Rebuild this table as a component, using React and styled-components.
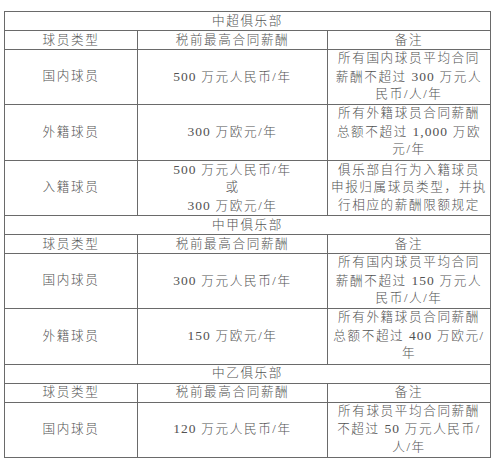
import React from 'react';
import styled, { createGlobalStyle } from 'styled-components';

const GlobalStyle = createGlobalStyle`
  html, body {
    margin: 0;
    padding: 0;
    background: #fff;
  }
`;

const Page = styled.div`
  padding: 11px 0 0 4px;
`;

const Table = styled.table`
  border-collapse: collapse;
  table-layout: fixed;
  width: 486px;
  font-family: 'Liberation Serif', 'Noto Sans CJK SC', serif;
  font-size: 12.6px;
  font-weight: 300;
  letter-spacing: 1.6px;
  color: #525252;
`;

const Row = styled.tr`
  height: ${(p) => p.h}px;
`;

const Cell = styled.td`
  border: 1px solid #6a6a6a;
  padding: 0;
  text-align: center;
  vertical-align: middle;
  line-height: ${(p) => (p.multi ? '17.5px' : '17px')};
  white-space: nowrap;
`;

const Num = styled.span`
  font-size: 13.5px;
  font-weight: 400;
  letter-spacing: 1px;
`;

const sections = [
  {
    title: '中超俱乐部',
    rows: [
      {
        type: '国内球员',
        pay: ['500 万元人民币/年'],
        note: ['所有国内球员平均合同', '薪酬不超过 300 万元人', '民币/人/年'],
        h: 54,
      },
      {
        type: '外籍球员',
        pay: ['300 万欧元/年'],
        note: ['所有外籍球员合同薪酬', '总额不超过 1,000 万欧', '元/年'],
        h: 56,
      },
      {
        type: '入籍球员',
        pay: ['500 万元人民币/年', '或', '300 万欧元/年'],
        note: ['俱乐部自行为入籍球员', '申报归属球员类型，并执', '行相应的薪酬限额规定'],
        h: 55,
      },
    ],
  },
  {
    title: '中甲俱乐部',
    rows: [
      {
        type: '国内球员',
        pay: ['300 万元人民币/年'],
        note: ['所有国内球员平均合同', '薪酬不超过 150 万元人', '民币/人/年'],
        h: 54,
      },
      {
        type: '外籍球员',
        pay: ['150 万欧元/年'],
        note: ['所有外籍球员合同薪酬', '总额不超过 400 万欧元/', '年'],
        h: 56,
      },
    ],
  },
  {
    title: '中乙俱乐部',
    rows: [
      {
        type: '国内球员',
        pay: ['120 万元人民币/年'],
        note: ['所有球员平均合同薪酬', '不超过 50 万元人民币/', '人/年'],
        h: 55,
      },
    ],
  },
];

// digits get their own span so they read a touch larger, like the source
const withNums = (text) =>
  text.split(/([\d,]+)/).map((part, i) =>
    /\d/.test(part) ? <Num key={i}>{part}</Num> : part
  );

const Lines = ({ lines }) =>
  lines.map((l, i) => (
    <React.Fragment key={i}>
      {i > 0 && <br />}
      {withNums(l)}
    </React.Fragment>
  ));

const App = () => {
  return (
    <>
      <GlobalStyle />
      <Page>
        <Table>
          <colgroup>
            <col style={{ width: 133 }} />
            <col style={{ width: 190 }} />
            <col style={{ width: 163 }} />
          </colgroup>
          <tbody>
            {sections.map((s) => (
              <React.Fragment key={s.title}>
                <Row h={19}>
                  <Cell colSpan={3}>{s.title}</Cell>
                </Row>
                <Row h={19}>
                  <Cell>球员类型</Cell>
                  <Cell>税前最高合同薪酬</Cell>
                  <Cell>备注</Cell>
                </Row>
                {s.rows.map((r) => (
                  <Row h={r.h} key={r.type}>
                    <Cell>{r.type}</Cell>
                    <Cell multi>
                      <Lines lines={r.pay} />
                    </Cell>
                    <Cell multi>
                      <Lines lines={r.note} />
                    </Cell>
                  </Row>
                ))}
              </React.Fragment>
            ))}
          </tbody>
        </Table>
      </Page>
    </>
  );
};

export default App;
